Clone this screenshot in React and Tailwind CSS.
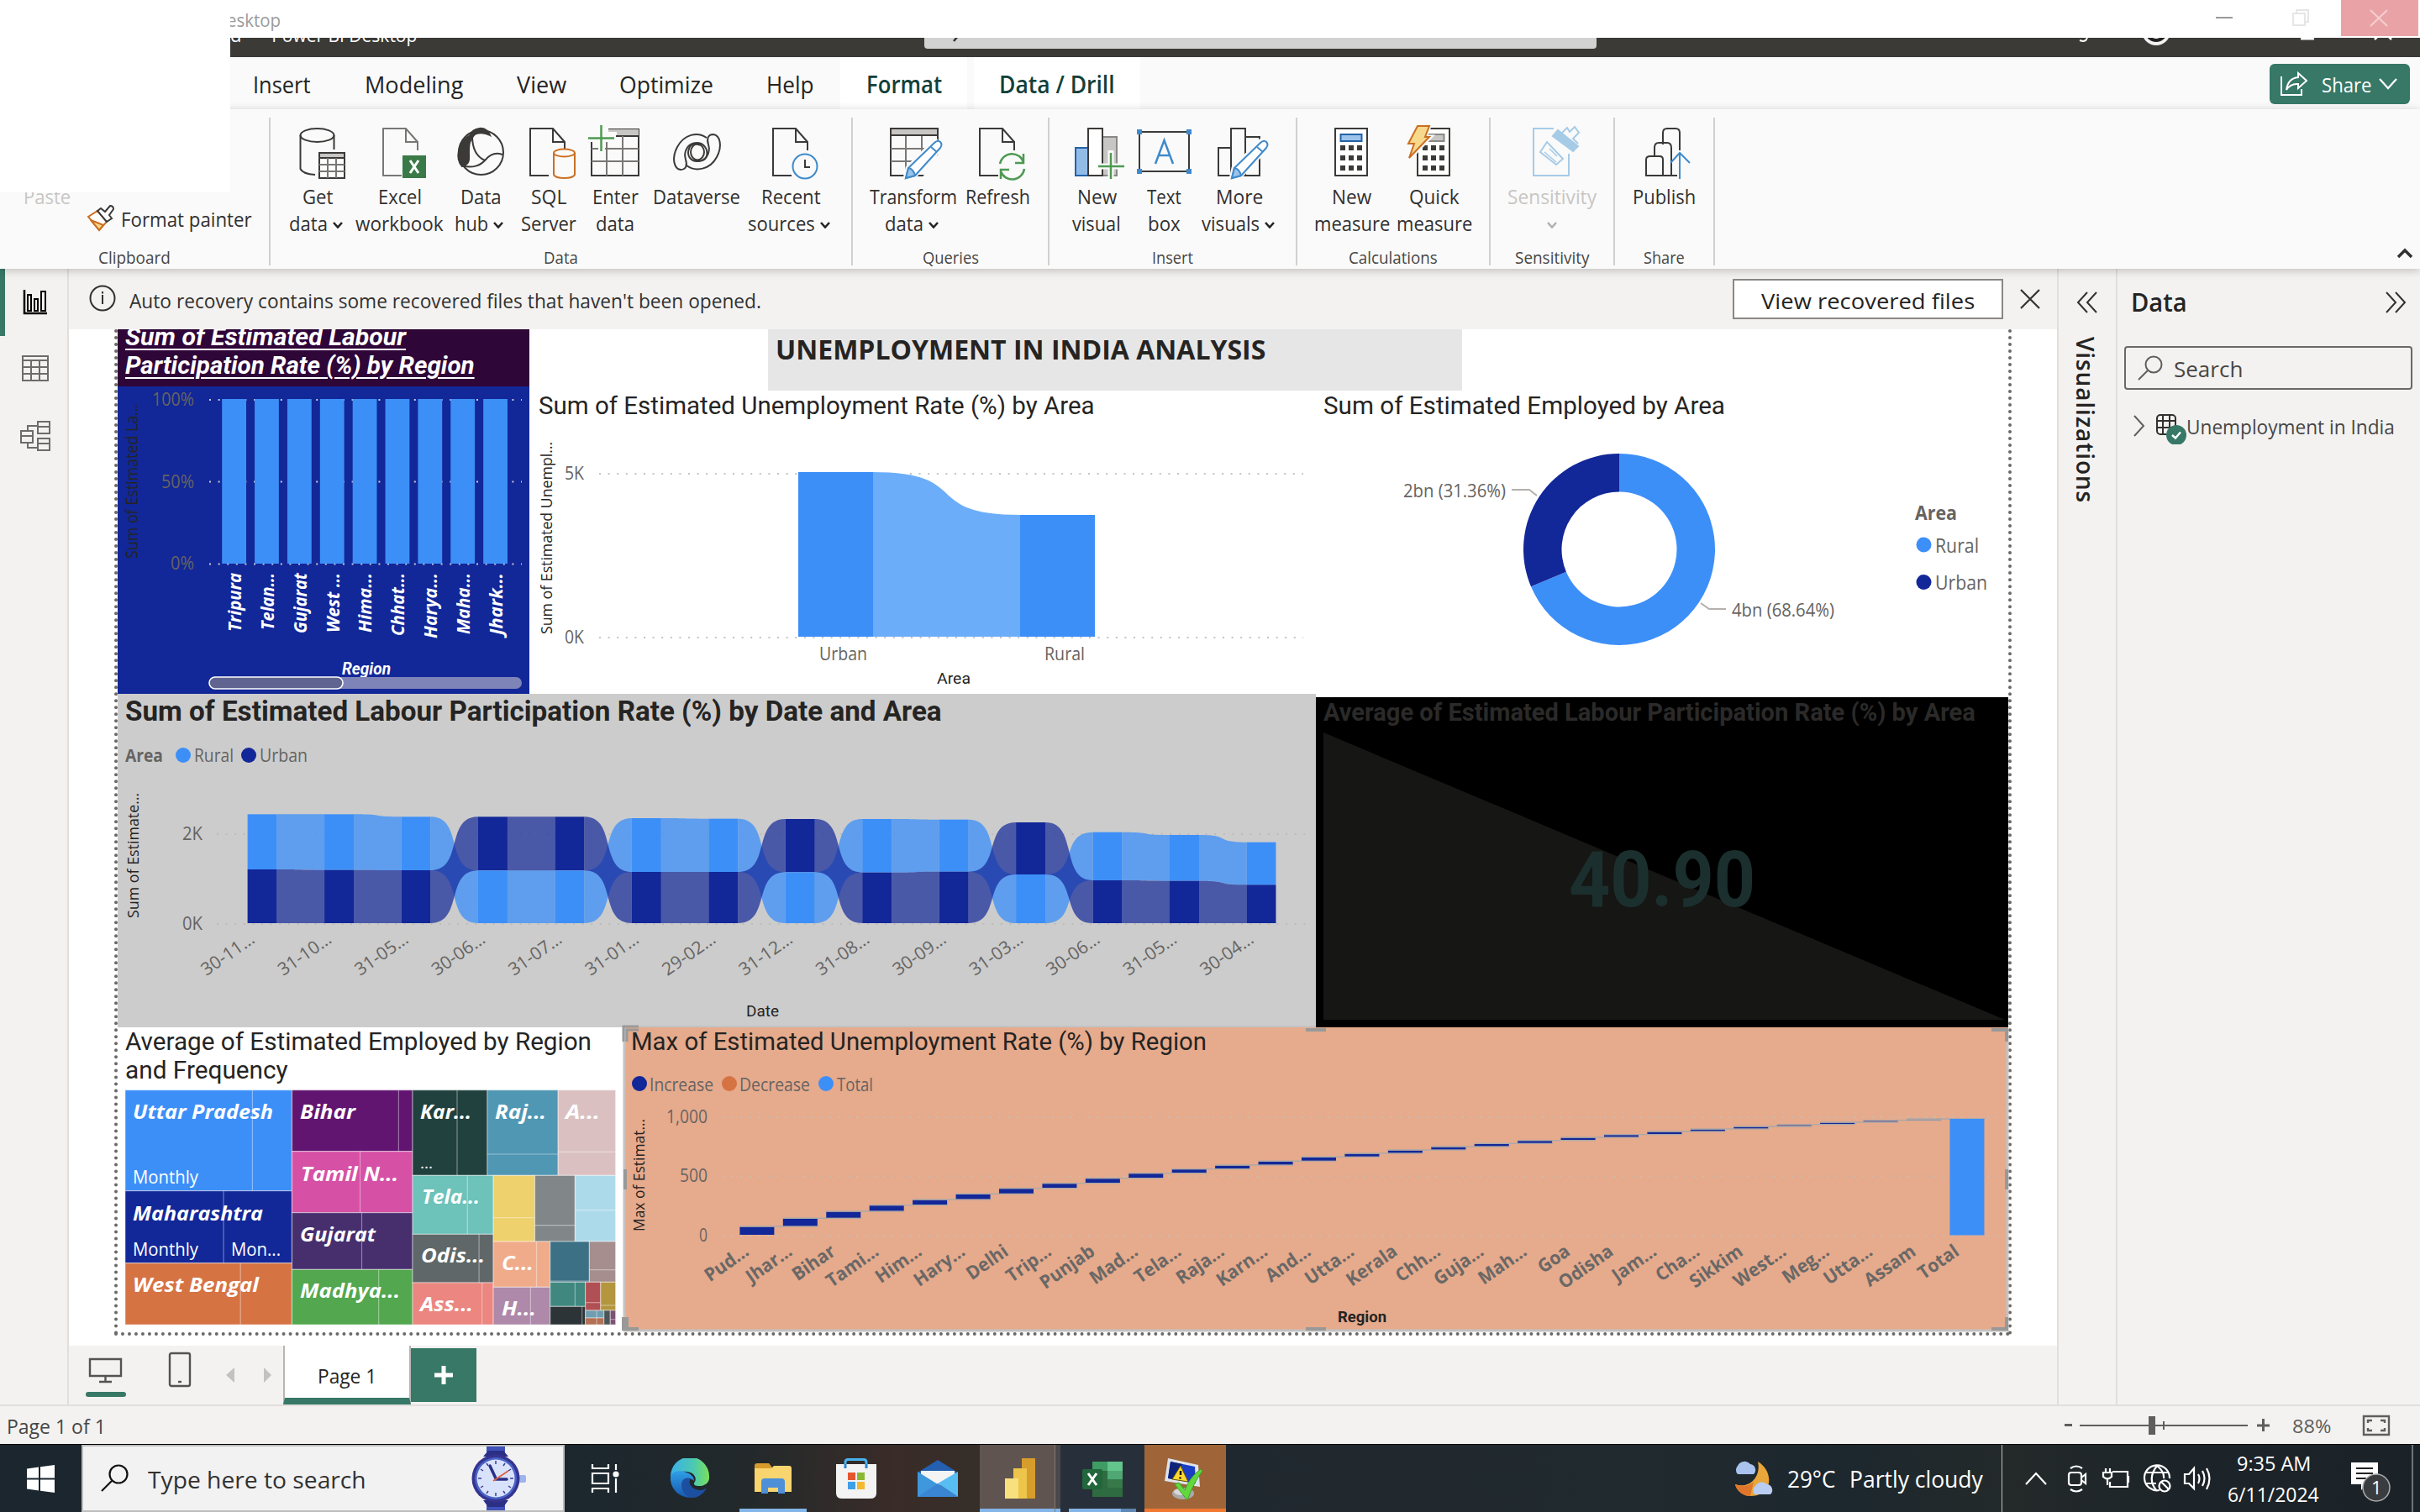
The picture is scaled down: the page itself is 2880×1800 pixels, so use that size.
import React, { useLayoutEffect, useRef, useState } from "react";

const BLUE = "#3d8ff8";
const NAVY = "#122798";

/* Single line of text set to an exact measure. */
function Fit({ w, className = "", children }) {
  const ref = useRef(null);
  const [s, setS] = useState(1);
  useLayoutEffect(() => {
    setS(w / ref.current.offsetWidth);
  }, [w]);
  return (
    <span className="block shrink-0 whitespace-nowrap text-left" style={{ width: w }}>
      <span ref={ref} className={"inline-block origin-left " + className} style={{ transform: `scaleX(${s})` }}>
        {children}
      </span>
    </span>
  );
}

/* Chart label with a fixed length. */
function L({ x, y, w, s = 21, c = "#666462", b, i, f = "'Open Sans', sans-serif", r, a, children }) {
  return (
    <text
      x={x}
      y={y}
      fontSize={s}
      fill={c}
      fontFamily={f}
      fontWeight={b || 400}
      fontStyle={i ? "italic" : "normal"}
      textAnchor={a || "start"}
      textLength={w}
      lengthAdjust="spacingAndGlyphs"
      transform={r ? `rotate(${r} ${x} ${y})` : undefined}
    >
      {children}
    </text>
  );
}
const DIN = "Roboto, sans-serif";

function Grid({ x1, x2, y, c = "#c4c4c4" }) {
  return <line x1={x1} x2={x2} y1={y} y2={y} stroke={c} strokeWidth="2" strokeDasharray="2 8.6" />;
}

/* ---------- ribbon icons ---------- */
const Ic = ({ children }) => (
  <svg width="68" height="64" viewBox="-2 0 68 64" fill="none" stroke="#3b3a39" strokeWidth="2" className="overflow-visible">
    {children}
  </svg>
);
const Doc = ({ x = 10, c = "#3b3a39" }) => (
  <path d={`M${x + 22} 60H${x}V4H${x + 27}L${x + 41} 20V30M${x + 27} 4V20H${x + 41}`} stroke={c} />
);
const Pencil = () => (
  <g stroke="#3f8acb">
    <path d="M58 18L66 26L34 60L22 64L25 51Z" fill="#fafafa" stroke="#fafafa" strokeWidth="5" />
    <path d="M57 21Q61 17 64 20Q67 23 64 27L34 60L23 63L26 51Z" fill="#fff" />
    <path d="M26 51Q32 52 34 60L23 63Z" fill="#9cc3ea" />
    <path d="M53 26L60 32" />
  </g>
);
const GetData = () => (
  <Ic>
    <ellipse cx="31.500" cy="12" rx="20" ry="8" />
    <path d="M11.500 12V52Q14 58 29 59M51.500 12V29" />
    <path d="M34 33H64V63H34Z" fill="#fff" />
    <path d="M34 33H64V39H34Z" fill="#c8c6c4" />
    <path d="M34 47H64M34 55H64M44 39V63M54 39V63" stroke="#7a7876" />
  </Ic>
);
const ExcelDoc = () => (
  <Ic>
    <Doc x={12} c="#797775" />
    <rect x="35" y="36" width="28" height="27" fill="#3a7a48" stroke="none" />
    <path d="M44 42L54 57M54 42L44 57" stroke="#fff" strokeWidth="3" />
  </Ic>
);
const DataHub = () => (
  <Ic>
    <ellipse cx="32.500" cy="32.500" rx="26.500" ry="26.500" />
    <path d="M19 13C23 2 38 0 43 12C36 8 27 9 19 13Z" fill="#3b3a39" />
    <path d="M20 12C4 20 2 40 10 49C20 46 18 40 18 32C18 22 19 17 24 12Z" fill="#3b3a39" />
    <path d="M22 13C22 28 28 38 37 42M10 48C22 52 32 48 38 41C43 35 50 32 58 35" />
  </Ic>
);
const Sql = () => (
  <Ic>
    <Doc x={10} />
    <g stroke="#cc6f23">
      <path d="M38 33V59Q40 63 50.500 63Q61 63 63 59V33" fill="#fafafa" />
      <ellipse cx="50.500" cy="33" rx="12.500" ry="4.500" fill="#fafafa" />
    </g>
  </Ic>
);
const EnterData = () => (
  <Ic>
    <path d="M4 20V60H60V5H24" />
    <path d="M24 5H60V13H34V8H24Z" fill="#c8c6c4" stroke="none" />
    <path d="M33 13H60" />
    <path d="M20 28H60M4 43H60M22 20V60M41 13V60M4 28H12" stroke="#7a7876" />
    <path d="M0 15.500H31M15.500 0V31" stroke="#4e9a52" strokeWidth="2.500" />
  </Ic>
);
const Dataverse = () => (
  <Ic>
    <path d="M44 15C33 7 17 11 9 26C2 39 5 52 13 53C20 53 21 47 19 41C16 31 22 21 32 21C41 21 46 29 44 37C42 43 34 44 30 41" />
    <path d="M20 48C31 56 48 53 56 38C63 25 60 12 52 11C45 11 44 17 46 23C49 33 43 43 33 43C24 43 20 35 23 28C25 22 31 21 36 24" />
    <ellipse cx="33" cy="32" rx="8" ry="9.500" />
  </Ic>
);
const Recent = () => (
  <Ic>
    <Doc x={11} />
    <circle cx="49" cy="49" r="14.500" stroke="#3f8acb" fill="#fafafa" />
    <path d="M49 41V50H55" />
  </Ic>
);
const TransformData = () => (
  <Ic>
    <path d="M5 4H61V60H5Z" />
    <path d="M5 4H61V12H5Z" fill="#c8c6c4" />
    <path d="M5 28H61M5 43H40M23 13V60M42 13V42" stroke="#7a7876" />
    <path d="M44 62H63V34Z" fill="#fafafa" stroke="#fafafa" />
    <Pencil />
  </Ic>
);
const RefreshIcon = () => (
  <Ic>
    <Doc x={10} />
    <g stroke="#4e9a52" strokeWidth="2.500">
      <path d="M34 46A14.500 14.500 0 0 1 62 44M62 34V45H52M63 52A14.500 14.500 0 0 1 35 55M35 64V53H45" />
    </g>
  </Ic>
);
const NewVisual = () => (
  <Ic>
    <path d="M39 14H56V60H39Z" fill="#c8c6c4" stroke="#8a8886" />
    <path d="M7 27H22V60H7Z" fill="#92bce8" stroke="#2462a8" />
    <path d="M22 4H39V60H22Z" fill="#fff" />
    <path d="M32 49H66M49 30V66" stroke="#fafafa" strokeWidth="7" />
    <path d="M34 49H65M49 33V64" stroke="#4e9a52" strokeWidth="2.500" />
  </Ic>
);
const TextBox = () => (
  <Ic>
    <path d="M3 8H62V55H3Z" />
    <g fill="#3f8acb" stroke="none">
      <path d="M0 5H6V11H0ZM59 5H65V11H59ZM0 52H6V58H0ZM59 52H65V58H59Z" />
    </g>
    <path d="M22 46L32.500 18L43 46M26 36H39" stroke="#3f8acb" strokeWidth="2.500" />
  </Ic>
);
const MoreVisuals = () => (
  <Ic>
    <path d="M22 60H7V27H22M22 4H39V60H22ZM39 14H56V60H39" />
    <Pencil />
  </Ic>
);
const CalcBody = ({ gray }) => (
  <g>
    <path d="M12 4H50V60H12Z" fill="#fff" />
    <path d="M18.500 11H43.500V19H18.500Z" fill={gray ? "#c8c6c4" : "#9cc3ea"} stroke={gray ? "#8a8886" : "#2462a8"} />
    <path d="M18 27H24M28 27H34M38 27H44M18 39H24M28 39H34M38 39H44M18 51H24M28 51H34M38 51H44" strokeWidth="6" />
  </g>
);
const Calc = () => (
  <Ic>
    <CalcBody />
  </Ic>
);
const Quick = () => (
  <Ic>
    <CalcBody gray />
    <path d="M12 1H26L21 14H27L2 40L8 22H1Z" fill="#f8d98c" stroke="#fafafa" strokeWidth="5" />
    <path d="M12 1H26L21 14H26L2 39L8 22H1Z" fill="#f8d98c" stroke="#cc6f23" />
  </Ic>
);
const Sensitivity = () => (
  <Ic>
    <g stroke="#a6cbe6">
      <path d="M34 4H10V60H52V34" />
      <path d="M18 32L26 20L45 40L37 47Z" />
      <path d="M23 32L37 44M29 28L38 37" strokeWidth="1.500" />
      <path d="M33 13L39 6L63 25L57 31Z" fill="#a6cbe6" />
      <path d="M43 10L50 3L53 8L59 2L64 9L57 16L63 22" />
    </g>
  </Ic>
);
const Publish = () => (
  <Ic>
    <path d="M31 23V9Q31 4 36 4H46Q51 4 51 9V30M21 36V27Q21 21 26 21H36Q41 21 41 27V60M11 41Q11 37 16 37H27Q31 37 31 41V60H11ZM31 60H48" />
    <path d="M51 64V33M40 45L51 33L63 45" stroke="#3f8acb" />
  </Ic>
);

const Chev = ({ c = "#252423", lead }) => (
  <svg width="12" height="8" viewBox="0 0 12 8" fill="none" stroke={c} strokeWidth="2.600" className={"mt-1 " + (lead ? "" : "ml-1.5 -mr-0.5")}>
    <path d="M1 1L6 6.500L11 1" />
  </svg>
);

function Tool({ w, icon: I, a, aw, b, bw, chev, dim }) {
  const tone = dim ? "text-[#c8c6c4]" : "text-[#323130]";
  return (
    <div className={"flex shrink-0 flex-col items-center text-2xl leading-8 " + tone} style={{ width: w }}>
      <I />
      <div className="mt-[5px] flex h-8 items-center justify-center">
        <Fit w={aw}>{a}</Fit>
      </div>
      <div className={"flex h-8 items-center justify-center " + (chev && b ? "-ml-1.5" : "")}>
        {b && <Fit w={bw}>{b}</Fit>}
        {chev && <Chev c={dim ? "#b3b0ad" : "#252423"} lead={!b} />}
      </div>
    </div>
  );
}

const GROUPS = [
  {
    w: 693, pl: 22, name: "Data", nw: 41,
    tools: [
      { w: 72, icon: GetData, a: "Get", aw: 36, b: "data", bw: 46, chev: true },
      { w: 123, icon: ExcelDoc, a: "Excel", aw: 52, b: "workbook", bw: 105 },
      { w: 70, icon: DataHub, a: "Data", aw: 49, b: "hub", bw: 40, chev: true },
      { w: 91, icon: Sql, a: "SQL", aw: 42, b: "Server", bw: 66 },
      { w: 68, icon: EnterData, a: "Enter", aw: 55, b: "data", bw: 46 },
      { w: 125, icon: Dataverse, a: "Dataverse", aw: 104 },
      { w: 100, icon: Recent, a: "Recent", aw: 71, b: "sources", bw: 80, chev: true },
    ],
  },
  {
    w: 234, pl: 17, name: "Queries", nw: 67,
    tools: [
      { w: 114, icon: TransformData, a: "Transform", aw: 104, b: "data", bw: 46, chev: true },
      { w: 87, icon: RefreshIcon, a: "Refresh", aw: 77 },
    ],
  },
  {
    w: 295, pl: 23, name: "Insert", nw: 49,
    tools: [
      { w: 70, icon: NewVisual, a: "New", aw: 47, b: "visual", bw: 58 },
      { w: 90, icon: TextBox, a: "Text", aw: 41, b: "box", bw: 39 },
      { w: 90, icon: MoreVisuals, a: "More", aw: 56, b: "visuals", bw: 69, chev: true },
    ],
  },
  {
    w: 230, pl: 20, name: "Calculations", nw: 106,
    tools: [
      { w: 93, icon: Calc, a: "New", aw: 47, b: "measure", bw: 90 },
      { w: 104, icon: Quick, a: "Quick", aw: 60, b: "measure", bw: 90 },
    ],
  },
  { w: 148, pl: 18, name: "Sensitivity", nw: 88, tools: [{ w: 113, icon: Sensitivity, a: "Sensitivity", aw: 106, chev: true, dim: true }] },
  { w: 119, pl: 20, name: "Share", nw: 49, tools: [{ w: 80, icon: Publish, a: "Publish", aw: 75 }] },
];

function TitleArea() {
  return (
    <>
      <div className="flex h-[45px] justify-between bg-white">
        <div className="flex pl-[270px] pt-[11px] text-[#9b9b9b]">
          <Fit w={64} className="text-[22px] leading-6">esktop</Fit>
        </div>
        <div className="flex">
          <svg width="243" height="45" viewBox="2637 0 243 45" fill="none" strokeWidth="2">
            <path d="M2637 21H2657" stroke="#999" />
            <path d="M2729 16H2743V30H2729ZM2733 16V12H2747V26H2743" stroke="#e6e6e6" />
            <rect x="2786" y="0" width="92" height="43" fill="#e9a3a7" />
            <path d="M2821 12L2841 31M2841 12L2821 31" stroke="#f4cfd1" />
          </svg>
        </div>
      </div>
      <div className="flex h-[23px] overflow-hidden bg-[#3b3a37] text-white">
        <div className="-mt-4 ml-[274px] flex w-[826px] gap-6">
          <Fit w={13} className="text-[22px] leading-6">d</Fit>
          <Fit w={185} className="text-[22px] leading-6">- Power BI Desktop</Fit>
        </div>
        <div className="h-[13px] w-[800px] overflow-hidden rounded-b bg-[#d2d2d2]">
          <svg width="60" height="13" viewBox="0 0 60 13">
            <path d="M35 4L40 -2" stroke="#333" strokeWidth="2.500" />
          </svg>
        </div>
        <svg width="980" height="23" viewBox="1900 45 980 23" fill="none">
          <path d="M2475 48Q2483 51 2484 44" stroke="#fff" strokeWidth="2" />
          <circle cx="2566" cy="37" r="17" fill="#f3f2f1" />
          <path d="M2557 44Q2566 52 2575 44" stroke="#222" strokeWidth="4" />
          <path d="M2738 46H2754" stroke="#fff" strokeWidth="3" />
          <path d="M2826 47L2829 44M2846 47L2843 44" stroke="#fff" strokeWidth="2.500" />
        </svg>
      </div>
    </>
  );
}

function TabsRow() {
  const t = "text-[28px] leading-9 text-[#252423]";
  const h = "text-[28px] leading-9 font-semibold text-[#12403a]";
  return (
    <div className="flex h-[62px] items-center bg-[#fafafa] pl-[301px]">
      <div className="flex w-[699px] items-center pt-px">
        <Fit w={68} className={t}>Insert</Fit>
        <div className="w-[65px]" />
        <Fit w={117} className={t}>Modeling</Fit>
        <div className="w-[64px]" />
        <Fit w={59} className={t}>View</Fit>
        <div className="w-[63px]" />
        <Fit w={112} className={t}>Optimize</Fit>
        <div className="w-[63px]" />
        <Fit w={57} className={t}>Help</Fit>
      </div>
      <div className="flex h-full w-[151px] items-center justify-center bg-white pt-px">
        <Fit w={90} className={h}>Format</Fit>
      </div>
      <div className="ml-2 flex h-full w-[198px] items-center justify-center bg-white pt-px">
        <Fit w={138} className={h}>Data / Drill</Fit>
      </div>
      <div className="ml-auto mr-3 flex h-12 w-[167px] items-center rounded-md bg-[#377867] pl-[13px] mt-0.5">
        <svg width="34" height="30" viewBox="0 0 34 30" fill="none" stroke="#fff" strokeWidth="2">
          <path d="M1 6V28H25V21" />
          <path d="M21 2L31 11L21 20V15Q12 14 7 22Q9 8 21 7Z" />
        </svg>
        <div className="ml-[15px] pt-0.5">
          <Fit w={60} className="text-2xl leading-8 text-white">Share</Fit>
        </div>
        <svg width="22" height="14" viewBox="0 0 22 14" fill="none" stroke="#fff" strokeWidth="2.200" className="ml-2">
          <path d="M1 1L11 12L21 1" />
        </svg>
      </div>
    </div>
  );
}

function Ribbon() {
  return (
    <div className="relative z-10 flex h-[190px] bg-[#fafafa] shadow-[0_2px_10px_rgba(0,0,0,0.22)]">
      <div className="flex w-[320px] flex-col">
        <div className="mt-[88px] h-[26px] pl-7 text-2xl leading-8 text-[#c8c6c4]">
          <Fit w={56}>Paste</Fit>
        </div>
        <div className="flex h-8 items-center pl-[103px] text-2xl leading-8 text-[#323130]">
          <svg width="34" height="32" viewBox="0 0 34 32" fill="none" strokeWidth="2">
            <path d="M2 14L13 7L24 20L15 30Z" fill="#fff" stroke="#cc6f23" />
            <path d="M5 18L20 24L15 30Z" fill="#f8d98c" stroke="#cc6f23" />
            <path d="M13 7L17 4L22 8L28 1Q32 1 32 5L27 12L30 16L24 20Z" fill="#fff" stroke="#3b3a39" />
          </svg>
          <div className="ml-[7px] pt-0.5">
            <Fit w={156}>Format painter</Fit>
          </div>
        </div>
        <div className="mt-[19px] flex h-6 justify-center text-xl leading-6 text-[#484644]">
          <Fit w={86}>Clipboard</Fit>
        </div>
      </div>
      {GROUPS.map((g) => (
        <div key={g.name} className="relative flex h-full shrink-0 flex-col pt-[19px]" style={{ width: g.w }}>
          <div className="absolute left-0 top-[10px] h-[176px] w-0.5 bg-[#d2d0ce]" />
          <div className="flex h-[146px]" style={{ paddingLeft: g.pl }}>
            {g.tools.map((t, i) => (
              <Tool key={i} {...t} />
            ))}
          </div>
          <div className="flex h-6 justify-center pl-0.5 text-xl leading-6 text-[#484644]">
            <Fit w={g.nw}>{g.name}</Fit>
          </div>
        </div>
      ))}
      <div className="mt-[10px] h-[176px] w-0.5 bg-[#d2d0ce]" />
      <svg width="20" height="14" viewBox="0 0 20 14" fill="none" stroke="#323130" strokeWidth="3.500" className="ml-auto mr-2 mt-[164px]">
        <path d="M2 12L10 4L18 12" />
      </svg>
    </div>
  );
}

function NavRail() {
  return (
    <div className="w-[82px] border-r-2 border-[#e1dfdd]">
      <div className="flex h-20 items-center border-l-[6px] border-[#377867] pl-[21px]">
        <svg width="30" height="30" viewBox="0 0 30 30" fill="none" stroke="#000" strokeWidth="2">
          <path d="M2 0V28H29" strokeWidth="2.500" />
          <path d="M6 6H10V25H6ZM14 11H18V25H14ZM22 2H27V25H22Z" />
        </svg>
      </div>
      <svg width="36" height="34" viewBox="0 0 36 34" fill="none" stroke="#6e6c6a" strokeWidth="2" className="ml-6 mt-[22px]">
        <path d="M3 2H33V31H3ZM3 7H33M3 15H33M3 23H33M13 7V31M23 7V31" />
      </svg>
      <svg width="40" height="40" viewBox="0 0 40 40" fill="none" stroke="#6e6c6a" strokeWidth="2" className="ml-[22px] mt-[43px]">
        <path d="M3 14H17V28H3ZM3 20H17M23 3H37V17H23ZM23 9H37M23 23H37V37H23ZM23 29H37M11 14V8H23M11 28V34H23" />
      </svg>
    </div>
  );
}

function MessageBar() {
  return (
    <div className="flex h-[72px] items-center pl-6">
      <svg width="32" height="32" viewBox="0 0 32 32" fill="none" stroke="#323130" strokeWidth="2" className="-mt-0.5">
        <circle cx="16" cy="16" r="14.500" />
        <path d="M16 12V23M16 8V10.500" />
      </svg>
      <div className="ml-4 pt-[3px]">
        <Fit w={752} className="text-2xl leading-8 text-[#323130]">Auto recovery contains some recovered files that haven't been opened.</Fit>
      </div>
      <div className="ml-auto flex h-12 w-[322px] items-center justify-center border-2 border-[#8a8886] bg-white pt-1">
        <Fit w={254} className="text-[26px] font-medium leading-8 text-[#252423]">View recovered files</Fit>
      </div>
      <svg width="26" height="26" viewBox="0 0 26 26" fill="none" stroke="#323130" strokeWidth="2.200" className="ml-[19px] mr-[19px]">
        <path d="M2 2L24 24M24 2L2 24" />
      </svg>
    </div>
  );
}

const title = "text-[29px] leading-[34px] text-[#252423] font-[Roboto]";

function StackedBar() {
  const names = [["Tripura", 70], ["Telan…", 68], ["Gujarat", 72], ["West …", 71], ["Hima…", 71], ["Chhat…", 75], ["Harya…", 78], ["Maha…", 73], ["Jhark…", 74]];
  const tl = "font-[Roboto] text-[30px] font-bold italic leading-[34px] text-white underline decoration-2 underline-offset-4";
  return (
    <div className="w-[490px] bg-[#122798]">
      <div className="h-[68px] overflow-hidden bg-[#2f0638] pl-[9px]">
        <div className="-mt-2">
          <Fit w={334} className={tl}>Sum of Estimated Labour</Fit>
          <Fit w={416} className={tl}>Participation Rate (%) by Region</Fit>
        </div>
      </div>
      <svg width="490" height="366" viewBox="140 460 490 366">
        {[476, 573.5, 671.5].map((y) => (
          <Grid key={y} x1={249} x2={621} y={y} c="#c9c9d6" />
        ))}
        <L x={181} y={483} w={50}>100%</L>
        <L x={192} y={580.500} w={39}>50%</L>
        <L x={203} y={678} w={28}>0%</L>
        <L x={164} y={665} w={184} s={20} c="#252423" r={-90}>Sum of Estimated La…</L>
        {names.map(([n, w], i) => (
          <g key={n}>
            <rect x={264.2 + i * 38.87} y="475" width="28.800" height="196" fill={BLUE} />
            <L x={287 + i * 38.87} y={682} w={w} s={21} b={700} i a="end" c="#fff" r={-90}>{n}</L>
          </g>
        ))}
        <L x={407} y={803} w={58} s={21} b={700} i c="#fff" f={DIN}>Region</L>
        <rect x="249" y="806" width="372" height="14" rx="7" fill="#7f84b8" />
        <rect x="249" y="806" width="159" height="14" rx="7" fill="#5f6490" stroke="#fff" strokeWidth="1.600" />
      </svg>
    </div>
  );
}

function AreaColumns() {
  return (
    <div className="w-[936px] pl-[11px]">
      <div className="flex h-9 items-center">
        <Fit w={662} className={title}>Sum of Estimated Unemployment Rate (%) by Area</Fit>
      </div>
      <svg width="925" height="325" viewBox="641 501 925 325">
        <path d="M1038 562C1160 562 1093 613 1215 613V758H1038Z" fill="#6cadf9" />
        <rect x="950" y="562" width="89" height="196" fill={BLUE} />
        <rect x="1214" y="613" width="89" height="145" fill={BLUE} />
        <Grid x1={713} x2={950} y={564} />
        <Grid x1={1083} x2={1551} y={564} />
        <Grid x1={713} x2={1551} y={759} />
        <L x={672} y={571} w={23}>5K</L>
        <L x={672} y={766} w={23}>0K</L>
        <L x={657} y={755} w={229} s={18} c="#252423" r={-90}>Sum of Estimated Unempl…</L>
        <L x={975} y={786} w={57}>Urban</L>
        <L x={1243} y={786} w={48}>Rural</L>
        <L x={1115} y={814} w={40} s={19} c="#252423" f={DIN}>Area</L>
      </svg>
    </div>
  );
}

function Donut() {
  const arc = (a0, a1) => {
    const p = (a, r) => [1927 + r * Math.sin(a), 654 - r * Math.cos(a)].join(" ");
    const big = a1 - a0 > Math.PI ? 1 : 0;
    return `M${p(a0, 114)}A114 114 0 ${big} 1 ${p(a1, 114)}L${p(a1, 68.5)}A68.5 68.5 0 ${big} 0 ${p(a0, 68.5)}Z`;
  };
  const cut = 0.6864 * 2 * Math.PI;
  return (
    <div className="w-[824px] pl-[9px]">
      <div className="flex h-9 items-center">
        <Fit w={478} className={title}>Sum of Estimated Employed by Area</Fit>
      </div>
      <svg width="815" height="325" viewBox="1575 501 815 325">
        <path d={arc(0, cut)} fill={BLUE} />
        <path d={arc(cut, 2 * Math.PI)} fill={NAVY} />
        <path d="M1799 583H1820L1829 590M2024 718L2034 725H2054" fill="none" stroke="#b3b0ad" strokeWidth="2" />
        <L x={1670} y={592} w={122}>2bn (31.36%)</L>
        <L x={2061} y={734} w={122}>4bn (68.64%)</L>
        <L x={2279} y={619} w={50} s={23} b={700}>Area</L>
        <circle cx="2289.500" cy="648.500" r="9" fill={BLUE} />
        <L x={2303} y={658} w={52} s={23}>Rural</L>
        <circle cx="2289.500" cy="693" r="9" fill={NAVY} />
        <L x={2303} y={702} w={62} s={23}>Urban</L>
      </svg>
    </div>
  );
}

/* top, split and stacking order for each date */
const RIB = [
  [448, 645, "R", "30-11…"], [448, 647, "R", "31-10…"], [457, 648, "R", "31-05…"], [457, 649, "U", "30-06…"],
  [457, 649, "U", "31-07…"], [462, 654, "R", "31-01…"], [464, 654, "R", "29-02…"], [465, 655, "U", "31-12…"],
  [465, 656, "R", "31-08…"], [467, 653, "R", "30-09…"], [477, 663, "U", "31-03…"], [512, 684, "R", "30-06…"],
  [522, 686, "R", "31-05…"], [548, 700, "R", "30-04…"],
].map(([t, m, o, n], i) => ({ x: 294.6 + i * 91.45, t: 820 + t / 3, m: 820 + m / 3, o, n }));

function RibbonChart() {
  const B = 1099;
  const band = (d, k) => (d.o === k ? [d.t, d.m] : [d.m, B]);
  const flow = (k) =>
    RIB.slice(0, -1)
      .map((a, i) => {
        const b = RIB[i + 1];
        const [a0, a1] = band(a, k);
        const [b0, b1] = band(b, k);
        const x0 = a.x + 35;
        const x1 = b.x;
        const c0 = x0 + (x1 - x0) * 0.7;
        const c1 = x0 + (x1 - x0) * 0.3;
        return `M${x0} ${a0}C${c0} ${a0} ${c1} ${b0} ${x1} ${b0}V${b1}C${c1} ${b1} ${c0} ${a1} ${x0} ${a1}Z`;
      })
      .join("");
  return (
    <div className="w-[1426px] bg-[#ccc] pl-[9px]">
      <div className="flex h-[41px] items-center">
        <Fit w={972} className="font-[Roboto] text-[33px] font-bold leading-[40px] text-[#252423]">Sum of Estimated Labour Participation Rate (%) by Date and Area</Fit>
      </div>
      <svg width="1417" height="356" viewBox="149 867 1417 356">
        <L x={149} y={907} w={45} b={700}>Area</L>
        <circle cx="218" cy="899" r="9" fill={BLUE} />
        <L x={231} y={907} w={47} s={22}>Rural</L>
        <circle cx="296" cy="899" r="9" fill={NAVY} />
        <L x={309} y={907} w={57} s={22}>Urban</L>
        <Grid x1={258} x2={1556} y={993} c="#bdbbb9" />
        <Grid x1={258} x2={1556} y={1100} c="#bdbbb9" />
        <path d={flow("R")} fill={BLUE} opacity="0.76" />
        <path d={flow("U")} fill={NAVY} opacity="0.7" />
        {RIB.map((d, i) => (
          <g key={i}>
            <rect x={d.x} y={d.t} width="35" height={d.m - d.t} fill={d.o === "R" ? BLUE : NAVY} />
            <rect x={d.x} y={d.m} width="35" height={B - d.m} fill={d.o === "R" ? NAVY : BLUE} />
            <L x={d.x + 10} y={1121} w={72} s={21} a="end" r={-35}>{d.n}</L>
          </g>
        ))}
        <L x={217} y={1000} w={24}>2K</L>
        <L x={217} y={1107} w={24}>0K</L>
        <L x={165} y={1093} w={149} s={18} c="#252423" r={-90}>Sum of Estimate…</L>
        <L x={888} y={1210} w={39} s={19} c="#252423" f={DIN}>Date</L>
      </svg>
    </div>
  );
}

function Card() {
  return (
    <div className="mt-1 w-[824px] bg-black pl-[9px]">
      <div className="flex h-[37px] items-center">
        <div className="-mt-0.5">
          <Fit w={776} className="font-[Roboto] text-[29px] font-bold leading-9 text-[#2b2a29]">Average of Estimated Labour Participation Rate (%) by Area</Fit>
        </div>
      </div>
      <svg width="815" height="356" viewBox="1575 867 815 356">
        <path d="M1575 872L2386 1214H1575Z" fill="#161614" />
        <L x={1867} y={1079} w={222} s={92} b={700} c="#1b302e" f={DIN}>40.90</L>
      </svg>
    </div>
  );
}

/* x0, y0, x1, y1, fill, vertical split, horizontal split */
const CELLS = [
  [48, 263, 550, 623, "#3d8ff8", 431], [48, 623, 550, 881, "#122798", 344], [48, 881, 550, 1101, "#d67343", 395],
  [550, 263, 913, 482, "#611570", 871], [550, 482, 913, 701, "#d651a5", 755], [550, 701, 913, 904, "#472f6e", 760],
  [550, 904, 913, 1101, "#52a74f", 811], [913, 263, 1138, 568, "#21413e", 1047], [1138, 263, 1351, 568, "#5097b4", 0, 492],
  [1351, 263, 1524, 568, "#dbc0c2", 0, 484], [913, 568, 1156, 778, "#6dc2ba", 1078], [913, 778, 1156, 951, "#606768", 1113],
  [913, 951, 1156, 1101, "#eb8680", 1122], [1156, 568, 1281, 804, "#eed06c", 0, 719], [1281, 568, 1402, 804, "#818789", 0, 746],
  [1402, 568, 1524, 804, "#addaeb", 0, 692], [1156, 804, 1327, 967, "#f0ab8a", 1286], [1156, 967, 1327, 1101, "#ae89aa", 1268],
  [1327, 804, 1445, 949, "#3c7085", 0, 945], [1445, 804, 1524, 949, "#a58e8d", 0, 905], [1327, 949, 1433, 1036, "#40887f", 1402],
  [1433, 949, 1479, 1050, "#b15054", 0, 1022], [1479, 949, 1524, 1050, "#b3963e", 0, 1032], [1327, 1036, 1433, 1101, "#2c3437", 1423],
  [1433, 1050, 1489, 1077, "#709eb0", 1467], [1433, 1077, 1489, 1101, "#b37054", 1467], [1489, 1050, 1508, 1101, "#4a5557"],
  [1508, 1050, 1524, 1101, "#7c5174", 0, 1082],
];
const CELL_LABELS = [
  [158, 1332, 167, "Uttar Pradesh"], [158, 1453, 155, "Maharashtra"], [158, 1538, 150, "West Bengal"],
  [357, 1332, 66, "Bihar"], [358, 1406, 116, "Tamil N..."], [357, 1478, 90, "Gujarat"], [357, 1545, 119, "Madhya..."],
  [500, 1332, 61, "Kar..."], [589, 1332, 61, "Raj..."], [673, 1332, 41, "A..."], [502, 1433, 69, "Tela..."],
  [501, 1503, 76, "Odis..."], [500, 1561, 63, "Ass..."], [597, 1512, 38, "C..."], [597, 1566, 41, "H..."],
];

function Treemap() {
  const px = (v) => 130 + v / 2.529;
  const py = (v) => 1210 + v / 3;
  return (
    <div className="w-[602px] pl-[9px]">
      <Fit w={555} className={title}>Average of Estimated Employed by Region</Fit>
      <Fit w={194} className={title}>and Frequency</Fit>
      <svg width="593" height="290" viewBox="149 1291 593 290">
        {CELLS.map(([x0, y0, x1, y1, c, v, h], i) => (
          <g key={i} stroke="#fff" strokeOpacity="0.4" strokeWidth="1.200">
            <rect x={px(x0)} y={py(y0)} width={px(x1) - px(x0)} height={py(y1) - py(y0)} fill={c} />
            {v ? <line x1={px(v)} x2={px(v)} y1={py(y0)} y2={py(y1)} /> : null}
            {h ? <line x1={px(x0)} x2={px(x1)} y1={py(h)} y2={py(h)} /> : null}
          </g>
        ))}
        {CELL_LABELS.map(([x, y, w, t]) => (
          <L key={t} x={x} y={y} w={w} s={24} b={700} i c="#fff">{t}</L>
        ))}
        <L x={158} y={1409} w={78} s={22} c="#fff">Monthly</L>
        <L x={158} y={1495} w={78} s={22} c="#fff">Monthly</L>
        <L x={275} y={1495} w={59} s={22} c="#fff">Mon...</L>
        <L x={500} y={1391} w={15} s={18} c="#fff">...</L>
      </svg>
    </div>
  );
}

const STEPS = [
  ["Pud…", 748], ["Jhar…", 719], ["Bihar", 694], ["Tami…", 672], ["Him…", 652], ["Hary…", 632], ["Delhi", 612], ["Trip…", 594],
  ["Punjab", 576], ["Mad…", 558], ["Tela…", 543], ["Raja…", 529], ["Karn…", 515], ["And…", 500], ["Utta…", 487], ["Kerala", 475],
  ["Chh…", 463], ["Guja…", 452], ["Mah…", 441], ["Goa", 430], ["Odisha", 420], ["Jam…", 409], ["Cha…", 400], ["Sikkim", 391],
  ["West…", 384], ["Meg…", 376], ["Utta…", 369], ["Assam", 364],
];

function Waterfall() {
  const py = (v) => 1210.6 + v / 3;
  const px = (i) => 880.4 + i * 51.43;
  const lab = (i, n) => (
    <text key={"l" + i} fontSize="22" fontWeight="700" fill="#6a6866" fontFamily="'Open Sans', sans-serif" textAnchor="end" transform={`translate(${px(i) + 12.5} 1493) rotate(-35) scale(0.96 1)`}>
      {n}
    </text>
  );
  return (
    <div className="relative w-[1648px] bg-[#e6aa8c] pl-[9px]">
      <Fit w={685} className={title}>Max of Estimated Unemployment Rate (%) by Region</Fit>
      <svg width="1639" height="326" viewBox="751 1257 1639 326">
        <circle cx="761" cy="1290" r="9" fill={NAVY} />
        <L x={773} y={1299} w={76} s={22}>Increase</L>
        <circle cx="868" cy="1290" r="9" fill="#d67343" />
        <L x={880} y={1299} w={84} s={22}>Decrease</L>
        <circle cx="983" cy="1290" r="9" fill={BLUE} />
        <L x={996} y={1299} w={43} s={22}>Total</L>
        {[1330, 1400.5, 1471].map((y) => (
          <Grid key={y} x1={860} x2={2383} y={y} c="#c9bdb3" />
        ))}
        <L x={793} y={1337} w={49}>1,000</L>
        <L x={809} y={1407} w={33}>500</L>
        <L x={832} y={1478} w={10}>0</L>
        <L x={767} y={1466} w={134} s={18} c="#252423" r={-90}>Max of Estimat…</L>
        {STEPS.map(([n, t], i) => {
          const b = i ? STEPS[i - 1][1] : 780;
          const y0 = py(t) + 0.6;
          return (
            <g key={i}>
              <rect x={px(i)} y={y0} width="41" height={Math.max(0.8, py(b) - y0 - 0.6)} fill={NAVY} opacity={b - t < 6 ? 0.35 : b - t < 8 ? 0.65 : 1} />
              <line x1={px(i)} x2={px(i) + 93} y1={py(t)} y2={py(t)} stroke="#a9a9a9" strokeWidth="1.400" />
              {lab(i, n)}
            </g>
          );
        })}
        <rect x={px(28)} y={1332} width="41" height={138.5} fill={BLUE} />
        {lab(28, "Total")}
        <L x={1592} y={1574} w={58} s={19} b={700} c="#252423" f={DIN}>Region</L>
      </svg>
      <svg width="1656" height="370" viewBox="738 1218 1656 370" fill="none" className="absolute -left-1 -top-[5px]">
        <path d="M743 1222V1584H2389V1224" stroke="#c3c3c3" strokeWidth="3" />
        <path d="M742 1222H1566" stroke="#c3c3c3" strokeWidth="2" />
        <g stroke="#999" strokeWidth="4">
          <path d="M742 1240V1222H760M746 1240V1226H760" strokeWidth="3" />
          <path d="M2370 1226H2388V1240M2370 1582H2388V1568M742 1568V1584M746 1568V1582H760" />
          <path d="M1554 1226H1578M1554 1582H1578M744 1392V1416M2388 1392V1416" />
        </g>
      </svg>
    </div>
  );
}

function Canvas() {
  return (
    <div className="h-[1210px] bg-white pl-[54px]">
      <div className="h-[1198px] w-[2258px] border-x-4 border-b-4 border-dotted border-[#6b6967]">
        <div className="flex h-[434px]">
          <StackedBar />
          <div className="w-[1760px]">
            <div className="ml-[284px] h-[73px] w-[826px] bg-[#e6e6e6] pl-[9px] pt-0.5">
              <Fit w={583} className="text-[33px] font-bold leading-[44px] text-[#252423]">UNEMPLOYMENT IN INDIA ANALYSIS</Fit>
            </div>
            <div className="flex">
              <AreaColumns />
              <Donut />
            </div>
          </div>
        </div>
        <div className="flex h-[397px]">
          <RibbonChart />
          <Card />
        </div>
        <div className="flex h-[360px]">
          <Treemap />
          <Waterfall />
        </div>
      </div>
    </div>
  );
}

function PageTabs() {
  return (
    <div className="flex h-[70px] text-[#252423]">
      <div className="flex w-[255px] pl-5">
        <div className="w-[48px] pt-3">
          <svg width="48" height="34" viewBox="0 0 48 34" fill="none" stroke="#555351" strokeWidth="2.400">
            <path d="M5 4H42V24H5ZM23.500 24V31M16 31H31" />
          </svg>
          <div className="mt-[9px] h-1.5 rounded-full bg-[#377867]" />
        </div>
        <svg width="28" height="44" viewBox="0 0 28 44" fill="none" stroke="#555351" strokeWidth="2.400" className="ml-[50px] mt-[7px]">
          <rect x="2" y="2" width="24" height="39" rx="2" />
          <path d="M12 36H16" />
        </svg>
        <svg width="56" height="20" viewBox="0 0 56 20" fill="#c4c2c0" className="ml-[40px] mt-[25px]">
          <path d="M11 1V19L1 10ZM46 1V19L55 10Z" />
        </svg>
      </div>
      <div className="flex w-[152px] justify-center border-x-2 border-b-8 border-x-[#b8b6b4] border-b-[#377867] bg-white pt-[18px]">
        <Fit w={70} className="text-2xl font-medium leading-9">Page 1</Fit>
      </div>
      <div className="mt-[3px] flex h-16 w-[78px] items-center justify-center bg-[#377867]">
        <svg width="24" height="24" viewBox="0 0 24 24" stroke="#fff" strokeWidth="5">
          <path d="M12 1V23M1 12H23" />
        </svg>
      </div>
    </div>
  );
}

function SidePanes() {
  return (
    <>
      <div className="flex w-[70px] flex-col items-center border-l-2 border-[#e1dfdd] pt-[27px]">
        <svg width="26" height="26" viewBox="0 0 26 26" fill="none" stroke="#323130" strokeWidth="2">
          <path d="M13 1L2 13L13 25M24 1L13 13L24 25" />
        </svg>
        <div className="mr-1 mt-7 h-[200px] [writing-mode:vertical-rl]">
          <span className="block whitespace-nowrap text-[28px] font-semibold leading-[34px] tracking-[0.9px] text-[#252423]">Visualizations</span>
        </div>
      </div>
      <div className="w-[362px] border-l-2 border-[#e1dfdd]">
        <div className="flex h-[92px] items-center justify-between pb-[12px] pl-4 pr-4">
          <Fit w={67} className="text-[30px] font-semibold leading-10 text-[#252423]">Data</Fit>
          <svg width="26" height="26" viewBox="0 0 26 26" fill="none" stroke="#323130" strokeWidth="2">
            <path d="M2 1L13 13L2 25M13 1L24 13L13 25" />
          </svg>
        </div>
        <div className="ml-2 flex h-[52px] w-[343px] items-center rounded border-2 border-[#6b6967] pl-3.5">
          <svg width="30" height="30" viewBox="0 0 30 30" fill="none" stroke="#605e5c" strokeWidth="2">
            <circle cx="19" cy="11" r="9.500" />
            <path d="M12 18L1 29" />
          </svg>
          <div className="ml-[13px] pt-0.5">
            <Fit w={82} className="text-[26px] leading-8 text-[#484644]">Search</Fit>
          </div>
        </div>
        <div className="mt-[21px] flex h-[44px] items-center pl-[18px]">
          <svg width="16" height="26" viewBox="0 0 16 26" fill="none" stroke="#605e5c" strokeWidth="2">
            <path d="M2 1L13 13L2 25" />
          </svg>
          <svg width="40" height="44" viewBox="0 0 40 44" fill="none" stroke="#323130" strokeWidth="2" className="ml-[10px]">
            <rect x="3" y="9" width="22" height="23" rx="4" />
            <path d="M3 16H25M3 24H25M10 9V32M18 9V32" />
            <circle cx="26" cy="33" r="12" fill="#377867" stroke="none" />
            <path d="M21 33L25 36.500L31 29.500" stroke="#fff" strokeWidth="2.500" />
          </svg>
          <div className="-ml-0.5 pt-px">
            <Fit w={248} className="text-2xl leading-8 text-[#484644]">Unemployment in India</Fit>
          </div>
        </div>
      </div>
    </>
  );
}

function StatusBar() {
  return (
    <div className="flex h-[47px] items-center border-t-2 border-[#e1dfdd] pl-2">
      <div className="pt-0.5">
        <Fit w={118} className="text-[23px] leading-8 text-[#484644]">Page 1 of 1</Fit>
      </div>
      <svg width="250" height="30" viewBox="2455 1682 250 30" fill="none" stroke="#605e5c" strokeWidth="3" className="ml-auto">
        <path d="M2457 1696.500H2466" />
        <path d="M2475 1697H2675" strokeWidth="2" />
        <path d="M2561 1686V1708" strokeWidth="8" />
        <path d="M2575 1692V1702" strokeWidth="2" />
        <path d="M2686 1697H2701M2693.500 1689V1704" />
      </svg>
      <div className="ml-[23px]">
        <Fit w={46} className="text-[22px] leading-8 text-[#605e5c]">88%</Fit>
      </div>
      <svg width="34" height="26" viewBox="0 0 34 26" fill="none" stroke="#605e5c" strokeWidth="2.400" className="ml-[37px] mr-[35px]">
        <path d="M2 2H32V24H2ZM7 10V7H12M22 7H27V10M27 16V19H22M12 19H7V16" />
      </svg>
    </div>
  );
}

function Watch() {
  return (
    <svg width="66" height="77" viewBox="0 0 66 77">
      <path d="M18 0H40V14H18ZM18 62H40V76H18Z" fill="#3f52b8" />
      <path d="M14 12L20 5H38L44 12ZM14 64L20 72H38L44 64Z" fill="#2b2f86" />
      <rect x="56" y="34" width="9" height="9" rx="2" fill="#9db4ee" />
      <circle cx="29" cy="38" r="28.500" fill="#35348f" />
      <circle cx="29" cy="38" r="25" fill="#4a63c8" />
      <circle cx="29" cy="38" r="22.500" fill="#d9e2fb" />
      <g stroke="#3a3f94" strokeWidth="1.500">
        <path d="M29 17V21M29 55V59M8 38H12M46 38H50M18 20L20 23M40 20L38 23M18 56L20 53M40 56L38 53M11 27L14 29M47 27L44 29M11 49L14 47M47 49L44 47" />
      </g>
      <path d="M29 38L22 23M29 39H42" stroke="#2b2f86" strokeWidth="3.500" strokeLinecap="round" />
      <path d="M26 41L44 29" stroke="#e06040" strokeWidth="1.800" />
    </svg>
  );
}

function EdgeIcon() {
  return (
    <svg width="48" height="48" viewBox="0 0 48 48">
      <defs>
        <linearGradient id="eg1" x1="0" x2="1">
          <stop offset="0" stopColor="#3bb0ea" />
          <stop offset="0.600" stopColor="#4cc9b0" />
          <stop offset="1" stopColor="#7be05a" />
        </linearGradient>
        <linearGradient id="eg2" x1="0" y1="0" x2="0" y2="1">
          <stop offset="0" stopColor="#2f9fe6" />
          <stop offset="1" stopColor="#1858b0" />
        </linearGradient>
      </defs>
      <path d="M1 22A23 23 0 0 1 47 21C48 29 42 33 35 33C28 33 28 30 30 28C33 22 27 16 20 16C10 15 3 19 1 22Z" fill="url(#eg1)" />
      <path d="M1 21C4 15 13 14 20 17C26 19 29 23 29 27C24 22 15 24 15 32C15 40 22 47 30 46A23 23 0 0 1 1 26Z" fill="url(#eg2)" />
      <path d="M14 32C14 25 19 22 25 24C22 28 24 34 31 37C36 39 41 38 44 35C41 42 34 47 27 47C19 46 14 39 14 32Z" fill="#1c4f9f" />
    </svg>
  );
}

function Taskbar() {
  return (
    <div className="flex h-[81px] border-t border-black bg-[linear-gradient(90deg,#1b262e_0%,#1c272e_24%,#23292b_31%,#3a2c28_37%,#33302a_43%,#20282f_50%,#212a2e_68%,#1c272e_76%,#242a2a_83%,#1d2429_90%,#1c2328_100%)] text-white">
      <div className="flex w-[97px] items-center pl-8">
        <svg width="33" height="33" viewBox="0 0 33 33" fill="#fff">
          <path d="M0 4.500L14 2.500V15.500H0ZM16 2.300L33 0V15.500H16ZM0 17.500H14V30.500L0 28.500ZM16 17.500H33V33L16 30.700Z" />
        </svg>
      </div>
      <div className="flex h-20 w-[575px] items-center border-2 border-[#bdbdbd] bg-[#f2f2f2] pl-5">
        <svg width="36" height="36" viewBox="0 0 36 36" fill="none" stroke="#111" strokeWidth="2.200">
          <circle cx="22" cy="13" r="10.500" />
          <path d="M14 21L2 33" />
        </svg>
        <div className="ml-[21px] pt-0.5">
          <Fit w={260} className="text-[28px] leading-9 text-[#323130]">Type here to search</Fit>
        </div>
        <div className="ml-auto mr-[43px]">
          <Watch />
        </div>
      </div>
      <div className="flex w-[125px] items-center pl-[31px]">
        <svg width="34" height="34" viewBox="0 0 34 34" fill="none" stroke="#fff" strokeWidth="2.200">
          <path d="M2 0V5H21V0M2 11H21V23H2ZM2 34V29H21V34M30 0V7M30 17V34" />
          <circle cx="30" cy="12" r="2.500" fill="#fff" />
        </svg>
      </div>
      <div className="flex w-[83px] items-center"><EdgeIcon /></div>
      <div className="flex w-20 flex-col items-center justify-between">
        <svg width="44" height="36" viewBox="0 0 44 36" className="mt-[22px]">
          <path d="M0 3Q0 0 3 0H17L21 5V10H0Z" fill="#d99b2b" />
          <path d="M0 6H20L23 3H41Q44 3 44 6V34H0Z" fill="#f9d56f" />
          <path d="M8 22Q8 18 12 18H32Q36 18 36 22V36H28V29H16V36H8Z" fill="#4d90d8" />
        </svg>
        <div className="h-1 w-20 bg-[#83b5e8]" />
      </div>
      <div className="flex w-[105px] items-center pl-[35px]">
        <svg width="48" height="48" viewBox="0 0 48 48">
          <path d="M11 12V5Q11 1.500 14 1.500H33Q36 1.500 36 5V12" fill="none" stroke="#48b2ee" strokeWidth="3" />
          <path d="M0 7H48V41Q48 48 41 48H7Q0 48 0 41Z" fill="#f3f3f3" />
          <path d="M11 12V7M36 12V7" stroke="#2a86d0" strokeWidth="3" />
          <path d="M14 17H23V26H14Z" fill="#e4572e" />
          <path d="M25 17H34V26H25Z" fill="#8ab833" />
          <path d="M14 28H23V37H14Z" fill="#3f9fe8" />
          <path d="M25 28H34V37H25Z" fill="#f5b92f" />
        </svg>
      </div>
      <div className="flex w-[101px] items-center pl-[27px]">
        <svg width="48" height="44" viewBox="0 0 48 44">
          <path d="M0 15L24 0L48 15V22H0Z" fill="#245fb0" />
          <path d="M4 13H44V30H4Z" fill="#f4f4f4" />
          <path d="M0 14L48 44H0Z" fill="#3f97dc" />
          <path d="M48 14V44L24 28Z" fill="#58bdf2" />
          <path d="M0 44L24 28L48 44Z" fill="#3a86d4" />
        </svg>
      </div>
      <div className="flex w-[89px] flex-col justify-between bg-[#5f5450]">
        <svg width="36" height="48" viewBox="0 0 36 48" className="ml-[30px] mt-4">
          <path d="M20 0H36V48H20Z" fill="#d69c2c" />
          <path d="M10 12H26V48H10Z" fill="#edc54b" />
          <path d="M0 24H16V48H0Z" fill="#f8e07f" />
        </svg>
        <div className="h-1 w-full bg-[#83b5e8]" />
      </div>
      <div className="flex w-[7px] flex-col justify-end border-l border-[#7d7876] bg-[#4a4848]">
        <div className="h-1 bg-[#83b5e8]" />
      </div>
      <div className="flex w-[100px] flex-col justify-between bg-[#27303a]">
        <svg width="48" height="44" viewBox="0 0 48 44" className="ml-[26px] mt-[19px]">
          <path d="M12 1H48V43H12Z" fill="#2f6b41" />
          <path d="M12 1H30V12H12Z" fill="#3f9c62" />
          <path d="M30 1H48V12H30Z" fill="#63c48c" />
          <path d="M30 12H48V22H30Z" fill="#4fa873" />
          <path d="M30 22H48V32H30Z" fill="#38794a" />
          <rect x="0" y="10" width="24" height="24" rx="2" fill="#22663b" />
          <path d="M7 15L17 29M17 15L7 29" stroke="#fff" strokeWidth="3" />
        </svg>
        <div className="ml-[10px] flex h-1 w-20">
          <div className="w-[62px] bg-[#83b5e8]" />
          <div className="w-[18px] bg-[#5f86b0]" />
        </div>
      </div>
      <div className="flex w-[97px] flex-col justify-between bg-[#9f6538]">
        <svg width="50" height="52" viewBox="0 0 50 52" className="ml-[23px] mt-4">
          <ellipse cx="23" cy="42" rx="13" ry="7" fill="#a9a9a9" />
          <ellipse cx="21" cy="40" rx="9" ry="4" fill="#d8d8d8" />
          <path d="M5 0L41 8L43 34L1 27Z" fill="#dfe3ea" />
          <path d="M8 4L37 10L38 30L5 24Z" fill="#1b3fc4" />
          <path d="M8 4L22 7L12 25L5 24Z" fill="#0f2378" />
          <path d="M20 9L29 28L10 25Z" fill="#ffd82e" stroke="#6a5a00" />
          <path d="M20 15V20M19.500 22.500V24.500" stroke="#111" strokeWidth="2.500" />
          <path d="M13 31L18 29L25 38Q31 22 44 13L46 15Q35 30 28 50Z" fill="#62d83c" stroke="#3aa524" />
        </svg>
        <div className="h-1 w-full bg-[#f07830]" />
      </div>
      <div className="ml-auto flex w-[498px] items-center pl-[76px]">
        <div className="flex h-full w-[422px] items-center border-r border-[#b9bcbe]">
          <div className="ml-[100px] flex items-center">
            <svg width="50" height="46" viewBox="0 0 50 46">
              <path d="M31 3C50 14 50 44 22 44C12 44 5 36 4 30C22 36 35 20 31 3Z" fill="#e9a63a" />
              <path d="M4 30C14 34 22 31 26 27L22 44C12 44 5 36 4 30Z" fill="#e0762c" />
              <path d="M7 18A7 7 0 0 1 7 8A9 9 0 0 1 22 6A7 7 0 0 1 26 18Z" fill="#a9c2ee" />
              <path d="M27 42A7 7 0 0 1 28 32A9 9 0 0 1 42 30A7 7 0 0 1 46 42Z" fill="#b9cdf2" />
            </svg>
            <div className="ml-[16px] pt-0.5">
              <Fit w={57} className="text-[27px] leading-9">29°C</Fit>
            </div>
            <div className="ml-[17px] pt-0.5">
              <Fit w={159} className="text-[27px] leading-9">Partly cloudy</Fit>
            </div>
          </div>
        </div>
      </div>
      <div className="flex w-[497px] items-center">
        <svg width="230" height="34" viewBox="2407 1743 230 34" fill="none" stroke="#fff" strokeWidth="2.200" className="ml-[24px] shrink-0">
          <path d="M2411 1767L2423 1754L2435 1767" />
          <rect x="2462" y="1753" width="15" height="15" rx="3" />
          <path d="M2477 1759L2482 1755V1766L2477 1762M2464 1748Q2471 1743 2478 1748M2464 1773Q2471 1778 2478 1773" />
          <path d="M2514 1752H2532V1770H2511V1764M2533 1757V1765M2506 1748V1753M2511 1748V1753M2503 1753H2513V1758Q2508 1763 2503 1758ZM2508 1761V1768" />
          <path d="M2570 1774A15 15 0 1 1 2582 1760M2553 1753H2581M2553 1766H2566M2567 1745Q2555 1760 2566 1774M2567 1745Q2576 1752 2575 1760" />
          <circle cx="2576" cy="1769" r="6.500" />
          <path d="M2572 1764L2581 1773" />
          <path d="M2600 1755H2605L2611 1748V1772L2605 1766H2600ZM2616 1755Q2619 1760 2616 1766M2621 1751Q2626 1760 2621 1769M2626 1748Q2633 1760 2626 1773" />
        </svg>
        <div className="ml-[14px] flex w-[109px] flex-col items-center">
          <div className="flex h-[37px] items-center"><Fit w={88} className="text-2xl leading-8">9:35 AM</Fit></div>
          <div className="flex h-[37px] items-center"><Fit w={109} className="text-2xl leading-8">6/11/2024</Fit></div>
        </div>
        <svg width="50" height="50" viewBox="2796 1742 50 50" className="ml-[36px] mt-2 shrink-0">
          <path d="M2798 1744H2830V1770H2816L2810 1777V1770H2798Z" fill="#fff" />
          <path d="M2804 1751H2824M2804 1757H2824M2804 1763H2818" stroke="#222" strokeWidth="2" />
          <circle cx="2828" cy="1774" r="16" fill="#3a3d40" stroke="#aaa" strokeWidth="1.500" />
          <text x="2822" y="1782" fontSize="22" fill="#fff" fontFamily="'Open Sans', sans-serif">1</text>
        </svg>
        <div className="ml-auto mr-2 h-full w-0.5 bg-[#6f7478]" />
      </div>
    </div>
  );
}

export default function App() {
  return (
    <div className="relative h-[1800px] w-[2880px] overflow-hidden bg-[#f3f2f1] font-['Open_Sans',sans-serif]">
      <TitleArea />
      <TabsRow />
      <Ribbon />
      <div className="flex h-[1352px]">
        <NavRail />
        <div className="w-[2366px]">
          <MessageBar />
          <Canvas />
          <PageTabs />
        </div>
        <SidePanes />
      </div>
      <StatusBar />
      <Taskbar />
      <div className="absolute left-0 top-0 z-20 h-[229px] w-[274px] bg-white" />
    </div>
  );
}
